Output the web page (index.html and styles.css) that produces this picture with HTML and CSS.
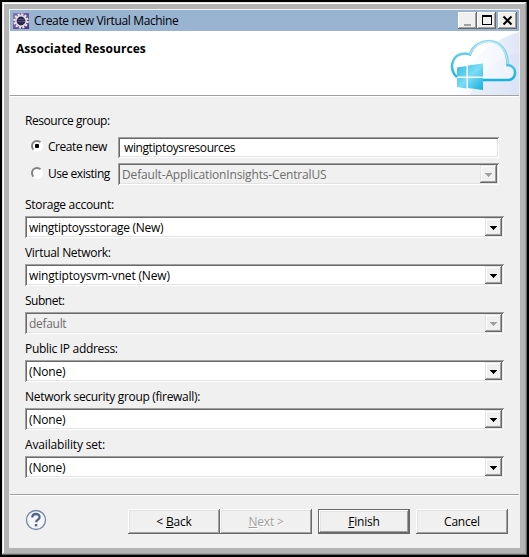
FILE: index.html
```html
<!DOCTYPE html>
<html lang="en">
<head>
<meta charset="utf-8">
<title>Create new Virtual Machine</title>
<link rel="stylesheet" href="styles.css">
</head>
<body>
<main class="window">
 <div class="client">
  <header class="titlebar">
    <svg class="gear" width="16" height="16" viewBox="0 0 16 16">
      <defs><linearGradient id="tile" x1="0" y1="0" x2="1" y2="1"><stop offset="0" stop-color="#8a7bb0"/><stop offset="1" stop-color="#4a2f7c"/></linearGradient></defs>
      <rect width="16" height="16" fill="url(#tile)"/>
      <circle cx="8" cy="8" r="6.700" fill="none" stroke="#efece8" stroke-width="2" stroke-dasharray="2.100 1.408"/>
      <circle cx="8" cy="8" r="5.200" fill="#2d2550" stroke="#e6e3e2" stroke-width="1.600"/>
      <path d="M4.500 6.500h7M4 8.500h8" stroke="#584e7e"/>
    </svg>
    <h1 class="caption">Create new Virtual Machine</h1>
    <div class="controls">
      <button class="control" aria-label="Minimize"><svg width="17" height="15"><path d="M5 11h7v2H5z" fill="#a0a0a0"/></svg></button>
      <button class="control" aria-label="Maximize"><svg width="17" height="15"><path d="M4 2h10v10H4zM5 4v7h8V4z" fill-rule="evenodd"/></svg></button>
      <button class="control close" aria-label="Close"><svg width="17" height="15"><path d="M4.500 3.500l8 8M12.500 3.500l-8 8" stroke="#000" stroke-width="2"/></svg></button>
    </div>
  </header>
  <section class="banner">
    <h2 class="heading">Associated Resources</h2>
    <svg class="cloud" width="74" height="63" viewBox="0 0 74 63">
      <defs>
        <linearGradient id="sky" x1="0" x2="1"><stop offset="0" stop-color="#fff"/><stop offset="1" stop-color="#dfe6f7"/></linearGradient>
        <linearGradient id="edge" x1="0" y1="0" x2="0" y2="1"><stop offset="0" stop-color="#8fdaec"/><stop offset="1" stop-color="#18b2df"/></linearGradient>
        <linearGradient id="pane" x1="0" y1="0" x2="1" y2="1"><stop offset="0" stop-color="#2bbbe5"/><stop offset=".5" stop-color="#7bdcf5"/><stop offset="1" stop-color="#12aee0"/></linearGradient>
      </defs>
      <path d="M8 63Q30 12 74 0V63z" fill="url(#sky)"/>
      <path d="M25 63Q40 30 74 20V63z" fill="#d5e0f5" opacity=".4"/>
      <path d="M12 45C4 39 5 22 20 21.500l5 1C31 4 63 2 62.500 33C73 34 72 48 63 48H36" fill="#fff" fill-opacity=".5"/>
      <path d="M12 45C4 39 5 22 20 21.500l5 1C31 4 63 2 62.500 33C73 34 72 48 63 48H36" fill="none" stroke="url(#edge)" stroke-width="2.600"/>
      <path d="M25 22.500C31 5 62 3 62.500 32" fill="none" stroke="#e6f8fc" stroke-width=".8"/>
      <path d="M12 35.500l9.500-1.500V44.500H12zM23 33.500l15-2V44.500H23zM12 46h9.500v10.500l-9.500-1.500zM23 46h15v12l-15-2z" fill="url(#pane)"/>
    </svg>
  </section>
  <form class="form">
    <p class="label first">Resource group:</p>
    <div class="choice">
      <span class="radio checked"></span><span class="option">Create new</span>
      <div class="field textbox"><span class="value">wingtiptoysresources</span></div>
    </div>
    <div class="choice second">
      <span class="radio"></span><span class="option">Use existing</span>
      <div class="field disabled"><span class="value wide">Default-ApplicationInsights-CentralUS</span><i class="drop"></i></div>
    </div>
    <p class="label">Storage account:</p>
    <div class="field"><span class="value">wingtiptoysstorage (New)</span><i class="drop"></i></div>
    <p class="label">Virtual Network:</p>
    <div class="field"><span class="value wide">wingtiptoysvm-vnet (New)</span><i class="drop"></i></div>
    <p class="label tight">Subnet:</p>
    <div class="field disabled"><span class="value">default</span><i class="drop"></i></div>
    <p class="label">Public IP address:</p>
    <div class="field"><span class="value wide">(None)</span><i class="drop"></i></div>
    <p class="label">Network security group (firewall):</p>
    <div class="field"><span class="value wide">(None)</span><i class="drop"></i></div>
    <p class="label wide">Availability set:</p>
    <div class="field"><span class="value wide">(None)</span><i class="drop"></i></div>
  </form>
  <footer class="footer">
    <svg class="help" width="22" height="22" viewBox="0 0 22 22"><circle cx="11" cy="11" r="9.500" fill="#f4f6f8" stroke="#7286a5" stroke-width="1.300"/><path d="M7.300 8.500C7.300 3.800 14.800 4 14.600 8.200c-.1 2.300-3.500 2.500-3.500 5" fill="none" stroke="#4d658c" stroke-width="2.300"/><path d="M9.800 15h2.500v2.400H9.800z" fill="#4d658c"/></svg>
    <button class="button"><span>&lt; <u>B</u>ack</span></button>
    <button class="button inactive"><span><u>N</u>ext &gt;</span></button>
    <button class="button primary"><span><u>F</u>inish</span></button>
    <button class="button cancel"><span>Cancel</span></button>
  </footer>
 </div>
</main>
</body>
</html>
```
FILE: styles.css
```css
* { box-sizing: border-box; }
html, body { margin: 0; background: #000; }
body { padding: 2px; font: 12px/16px "Open Sans", "Noto Sans", sans-serif; letter-spacing: -.3px; color: #000; }
h1, h2, p { margin: 0; font: inherit; }
svg { display: block; flex: none; }

.window {
  width: 525px;
  height: 553px;
  padding: 7px;
  background: #b4b4b4;
  box-shadow: inset -1px -1px #696969, inset 1px 1px #e3e3e3, inset -2px -2px #a0a0a0, inset 2px 2px #fff;
}
.client { height: 539px; padding: 1px; background: #f0f0f0; }
.titlebar {
  display: flex;
  align-items: center;
  height: 21px;
  padding: 0 2px 0 3px;
  background: #99b4d1;
}
.caption { flex: 1; margin-left: 5px; padding-top: 1px; letter-spacing: -.36px; white-space: nowrap; }
.controls { display: flex; }
.control {
  display: block;
  width: 19px;
  height: 17px;
  padding: 0;
  background: #f0f0f0;
  border: 0;
  box-shadow: inset -1px -1px #696969, inset 1px 1px #fff, inset -2px -2px #a0a0a0;
}
.control svg { margin: 1px; }
.close { margin-left: 2px; }

.banner {
  display: flex;
  justify-content: space-between;
  height: 65px;
  padding: 1px 0 0 6px;
  background: #fff;
  border-bottom: 1px solid #a0a0a0;
}
.heading { margin-top: 9px; font-weight: 700; letter-spacing: .06px; white-space: nowrap; }

.form { height: 399px; padding: 16px 15px 0 15px; border-top: 1px solid #fff; border-bottom: 1px solid #a0a0a0; }
.label { height: 26px; padding-top: 7px; white-space: nowrap; }
.label.first { height: 24px; padding-top: 0; letter-spacing: -.45px; }
.tight { letter-spacing: -.5px; }
.wide { letter-spacing: -.16px; }
.choice { display: flex; align-items: flex-start; width: 474px; height: 26px; }
.second { height: 27px; }
.radio {
  width: 12px;
  height: 12px;
  margin: 3px 0 0 6px;
  border: 2px solid;
  border-color: #808080 #fff #fff #808080;
  border-radius: 50%;
  background: #fff;
}
.checked { background: radial-gradient(circle, #000 0 2px, #fff 2.500px); }
.option { width: 70px; margin-left: 5px; padding-top: 2px; letter-spacing: -.45px; white-space: nowrap; }
.second .radio { margin-top: 4px; }
.second .option { padding-top: 3px; }
.choice .field { flex: 1; }
.field {
  display: flex;
  height: 22px;
  padding: 2px;
  background: #fff;
  box-shadow: inset 1px 1px #a0a0a0, inset -1px -1px #fff, inset 2px 2px #696969, inset -2px -2px #e3e3e3;
}
.value { flex: 1; padding: 1px 0 0 2px; line-height: 18px; white-space: nowrap; }
.textbox { height: 21px; }
.textbox .value { padding: 0 0 0 4px; letter-spacing: -.4px; }
.disabled { color: #6d6d6d; background: #f0f0f0; }
.drop {
  display: grid;
  place-items: center;
  width: 17px;
  height: 18px;
  padding-top: 2px;
  background: #f0f0f0;
  box-shadow: inset -1px -1px #696969, inset 1px 1px #e3e3e3, inset -2px -2px #a0a0a0, inset 2px 2px #fff;
}
.drop::after {
  content: "";
  width: 7px;
  height: 4px;
  background: #000;
  clip-path: polygon(0 0, 7px 0, 7px 1px, 6px 1px, 6px 2px, 5px 2px, 5px 3px, 4px 3px, 4px 4px, 3px 4px, 3px 3px, 2px 3px, 2px 2px, 1px 2px, 1px 1px, 0 1px);
}
.disabled .drop::after { background: #a0a0a0; }

.footer { display: flex; height: 52px; padding: 13px 11px 0 15px; border-top: 1px solid #fff; }
.button {
  width: 92px;
  height: 25px;
  padding: 0;
  font: inherit;
  color: #000;
  letter-spacing: -.2px;
  background: #f0f0f0;
  border: 0;
  box-shadow: inset -1px -1px #696969, inset 1px 1px #fff, inset -2px -2px #a0a0a0, inset 2px 2px #e3e3e3;
}
.help { margin-right: 81px; }
.inactive { color: #a0a0a0; text-shadow: 1px 1px #fff; }
.primary {
  margin-left: 6px;
  box-shadow: inset 0 0 0 1px #696969, inset -2px -2px #696969, inset 2px 2px #fff, inset -3px -3px #a0a0a0, inset 3px 3px #e3e3e3;
}
.cancel { margin-left: 6px; }
```
